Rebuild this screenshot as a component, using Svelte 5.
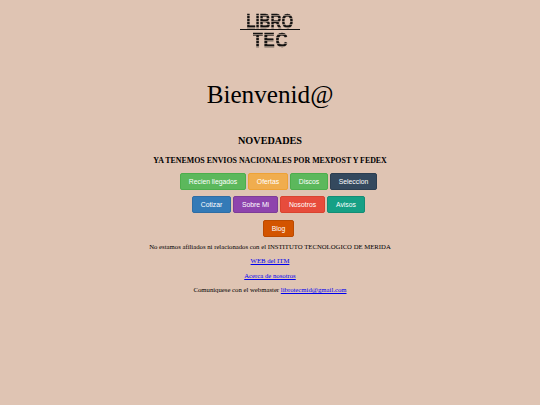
<script>
  const rows = [
    [
      { label: "Recien llegados", color: "green", width: 66 },
      { label: "Ofertas", color: "orange", width: 40 },
      { label: "Discos", color: "green", width: 38 },
      { label: "Seleccion", color: "navy", width: 47 },
    ],
    [
      { label: "Cotizar", color: "blue", width: 39 },
      { label: "Sobre Mi", color: "purple", width: 45 },
      { label: "Nosotros", color: "red", width: 45 },
      { label: "Avisos", color: "teal", width: 38 },
    ],
    [{ label: "Blog", color: "rust", width: 31 }],
  ];
</script>

<main class="page">
  <div class="logo">
    <div class="logo-line libro">LIBRO</div>
    <div class="rule"></div>
    <div class="logo-line tec">TEC</div>
  </div>

  <h1>Bienvenid@</h1>
  <h2>NOVEDADES</h2>
  <h3>YA TENEMOS ENVIOS NACIONALES POR MEXPOST Y FEDEX</h3>

  <nav class="menu">
    {#each rows as row}
      <div class="row">
        {#each row as item}
          <a href="#top" class="btn {item.color}" style="width: {item.width}px">{item.label}</a>
        {/each}
      </div>
    {/each}
  </nav>

  <p>No estamos afiliados ni relacionados con el INSTITUTO TECNOLOGICO DE MERIDA</p>
  <p><a href="#top">WEB del ITM</a></p>
  <p><a href="#top">Acerca de nosotros</a></p>
  <p>Comuniquese con el webmaster <a href="#top">librotecmid@gmail.com</a></p>
</main>

<style>
  :global(body) {
    margin: 0;
    background: #dfc4b3;
  }
  .page {
    height: 405px;
    overflow: hidden;
    box-sizing: border-box;
    padding-top: 12px;
    display: flex;
    flex-direction: column;
    align-items: center;
    font-family: "Liberation Serif", serif;
    color: #000;
    text-align: center;
  }
  .logo {
    width: 60px;
    display: flex;
    flex-direction: column;
    align-items: center;
  }
  .logo-line {
    font-family: "Liberation Sans", sans-serif;
    font-weight: 700;
    font-size: 21px;
    line-height: 16px;
    height: 16px;
    -webkit-text-stroke: 0.5px transparent;
    background: repeating-linear-gradient(#141211 0 2.2px, #8d7d72 2.2px 3px);
    -webkit-background-clip: text;
    background-clip: text;
    color: transparent;
  }
  .libro {
    transform: scaleX(0.72);
    margin-top: 1px;
  }
  .tec {
    transform: scaleX(0.8);
    letter-spacing: 1px;
    margin-top: 2px;
  }
  .rule {
    width: 60px;
    height: 1px;
    background: #111;
  }
  h1 {
    margin: 32px 0 0;
    font-size: 25.2px;
    line-height: 30px;
    font-weight: 400;
  }
  h2 {
    margin: 24.5px 0 0;
    font-size: 10.2px;
    line-height: 12px;
    font-weight: 700;
  }
  h3 {
    margin: 9.5px 0 0;
    font-size: 7.9px;
    line-height: 10px;
    font-weight: 700;
  }
  .menu {
    margin-top: 7px;
    padding-left: 17px;
    display: flex;
    flex-direction: column;
    align-items: center;
    gap: 6.3px;
  }
  .row {
    display: flex;
    justify-content: center;
    gap: 2px;
  }
  .btn {
    box-sizing: border-box;
    height: 17px;
    border-radius: 2px;
    border: 1px solid transparent;
    font-family: "Liberation Sans", sans-serif;
    font-size: 6.8px;
    line-height: 15px;
    color: #fff;
    text-decoration: none;
  }
  .green { background: #5cb85c; border-color: #4cae4c; }
  .orange { background: #f0ad4e; border-color: #eea236; }
  .navy { background: #34495e; border-color: #2c3e50; }
  .blue { background: #337ab7; border-color: #2e6da4; }
  .purple { background: #8e44ad; border-color: #7d3c98; }
  .red { background: #e74c3c; border-color: #d9432f; }
  .teal { background: #16a085; border-color: #138d75; }
  .rust { background: #d35400; border-color: #ba4a00; }
  p {
    margin: 0 0 5.4px;
    font-size: 6.72px;
    line-height: 9px;
  }
  .menu + p {
    margin-top: 5.5px;
  }
  p a {
    color: #00e;
    text-decoration: underline;
  }
</style>
